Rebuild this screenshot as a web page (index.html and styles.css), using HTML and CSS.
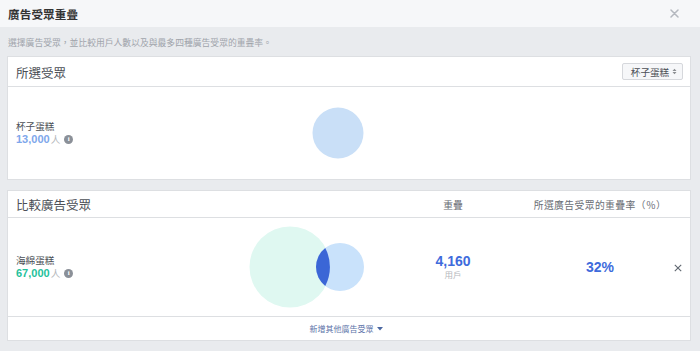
FILE: index.html
```html
<!DOCTYPE html>
<html lang="zh-Hant">
<head>
<meta charset="utf-8">
<title>廣告受眾重疊</title>
<link rel="stylesheet" href="styles.css">
</head>
<body>
<div class="dialog">
  <div class="topbar">
    <span class="title">廣告受眾重疊</span>
    <svg class="close" width="9" height="9" viewBox="0 0 9 9"><path d="M1 1 L8 8 M8 1 L1 8" stroke="#b4b8bf" stroke-width="1.5" stroke-linecap="round"/></svg>
  </div>
  <div class="content">
    <p class="desc">選擇廣告受眾，並比較用戶人數以及與最多四種廣告受眾的重疊率。</p>

    <section class="card card-selected">
      <div class="card-head head1">
        <span class="card-title">所選受眾</span>
        <span class="select">杯子蛋糕<svg class="updown" width="5" height="7" viewBox="0 0 5 7"><path d="M0.5 3 L2.5 0.8 L4.5 3 Z M0.5 4 L2.5 6.2 L4.5 4 Z" fill="#8a8d91"/></svg></span>
      </div>
      <div class="row row1">
        <div class="aud">
          <div class="aud-name">杯子蛋糕</div>
          <div class="aud-count"><b class="num light">13,000</b><span class="unit">人</span><span class="info">i</span></div>
        </div>
        <svg class="venn" width="140" height="84" viewBox="0 0 140 84">
          <circle cx="98" cy="42" r="25.5" fill="#c9dff7"/>
        </svg>
      </div>
    </section>

    <section class="card card-compare">
      <div class="card-head grid head2">
        <span class="card-title span2">比較廣告受眾</span>
        <span class="col-label">重疊</span>
        <span class="col-label rate-label">所選廣告受眾的重疊率（％）</span>
      </div>
      <div class="row grid row2">
        <div class="aud">
          <div class="aud-name">海綿蛋糕</div>
          <div class="aud-count"><b class="num teal">67,000</b><span class="unit">人</span><span class="info">i</span></div>
        </div>
        <svg class="venn" width="140" height="84" viewBox="0 0 140 84">
          <circle cx="50" cy="42" r="40.5" fill="#dff8f1"/>
          <circle cx="100" cy="42" r="24" fill="#c9e2fb"/>
          <path d="M85.24 23.08 A40.5 40.5 0 0 1 85.24 60.92 A24 24 0 0 1 85.24 23.08 Z" fill="#3b66d6"/>
        </svg>
        <div class="overlap">
          <div class="big">4,160</div>
          <div class="sub">用戶</div>
        </div>
        <div class="rate"><span class="big">32%</span></div>
        <svg class="remove" width="8" height="8" viewBox="0 0 8 8"><path d="M0.8 0.8 L7.2 7.2 M7.2 0.8 L0.8 7.2" stroke="#606770" stroke-width="1.1"/></svg>
      </div>
      <div class="card-foot">
        <span class="add">新增其他廣告受眾<svg class="caret" width="6" height="4" viewBox="0 0 6 4"><path d="M0 0 H6 L3 3.5 Z" fill="#4b67a1"/></svg></span>
      </div>
    </section>
  </div>
</div>
</body>
</html>
```

FILE: styles.css
```css
* { box-sizing: border-box; }

html, body {
  margin: 0;
  padding: 0;
}

body {
  width: 700px;
  height: 351px;
  overflow: hidden;
  font-family: "Liberation Sans", "Noto Sans CJK TC", sans-serif;
  color: #1d2129;
  background: #e9ebee;
}

.dialog {
  width: 700px;
  height: 351px;
  display: flex;
  flex-direction: column;
}

.topbar {
  height: 27px;
  background: #f6f7f9;
  display: flex;
  align-items: center;
  justify-content: space-between;
  padding: 0 21px 0 8px;
}

.title {
  font-size: 11.5px;
  font-weight: bold;
  color: #333;
  letter-spacing: 0.2px;
}

.close { display: block; }

.content {
  padding: 0 9px 0 7px;
}

.desc {
  margin: 0;
  padding: 9px 0 6px 1px;
  line-height: 14px;
  font-size: 8.8px;
  color: #a0a4ab;
}

.card {
  background: #fff;
  border: 1px solid #dddfe2;
}

.card-compare {
  margin-top: 10px;
}

.card-head {
  border-bottom: 1px solid #dddfe2;
  display: flex;
  align-items: center;
  padding: 0 7px 0 8px;
}

.head1 {
  height: 30px;
  justify-content: space-between;
}

.head2 {
  height: 27px;
}

.card-title {
  font-size: 12.5px;
  color: #4b4f56;
  padding-top: 1px;
}

.select {
  height: 17px;
  width: 61px;
  border: 1px solid #d6d8dc;
  background: #f6f7f9;
  border-radius: 2px;
  font-size: 9.6px;
  color: #4b4f56;
  display: flex;
  align-items: center;
  justify-content: center;
  gap: 3px;
  padding-left: 3px;
}

.updown { display: block; }

.grid {
  display: grid;
  grid-template-columns: 224px 140px 146px 148px 8px;
  align-items: center;
}

.span2 { grid-column: span 2; }

.col-label {
  text-align: center;
  font-size: 9.8px;
  color: #6a6e75;
  padding-top: 1px;
}

.rate-label {
  letter-spacing: 0.4px;
}

.row {
  padding: 0 8px;
}

.row1 {
  height: 92px;
  display: flex;
  align-items: center;
}

.row1 .aud {
  width: 224px;
}

.row2 {
  height: 99px;
  border-bottom: 1px solid #dddfe2;
}

.aud-name {
  font-size: 9.6px;
  line-height: 12px;
  color: #4b4f56;
}

.aud-count {
  display: flex;
  align-items: center;
  line-height: 13px;
}

.num {
  font-size: 11px;
  font-weight: bold;
}

.light { color: #7ea7eb; }
.teal { color: #1fc19b; }

.unit {
  font-size: 9.6px;
  color: #b5b8bd;
  margin-left: 1px;
}

.info {
  display: inline-flex;
  align-items: center;
  justify-content: center;
  width: 9px;
  height: 9px;
  border-radius: 50%;
  background: #8b9098;
  color: #fff;
  font-size: 7px;
  font-weight: bold;
  font-family: "Liberation Serif", serif;
  margin-left: 4px;
  line-height: 1;
}

.venn { display: block; }

.overlap {
  text-align: center;
}

.big {
  font-size: 14px;
  font-weight: bold;
  color: #3e6bdc;
  line-height: 16px;
}

.sub {
  font-size: 8.5px;
  color: #b5b8bd;
  line-height: 12px;
}

.rate {
  text-align: center;
}

.remove {
  display: block;
  justify-self: center;
  margin-top: 2px;
}

.card-foot {
  height: 23px;
  display: flex;
  align-items: center;
  justify-content: center;
}

.add {
  font-size: 8px;
  color: #5a72a8;
  display: flex;
  align-items: center;
  gap: 3px;
  margin-right: 6px;
}

.caret { display: block; }
```
